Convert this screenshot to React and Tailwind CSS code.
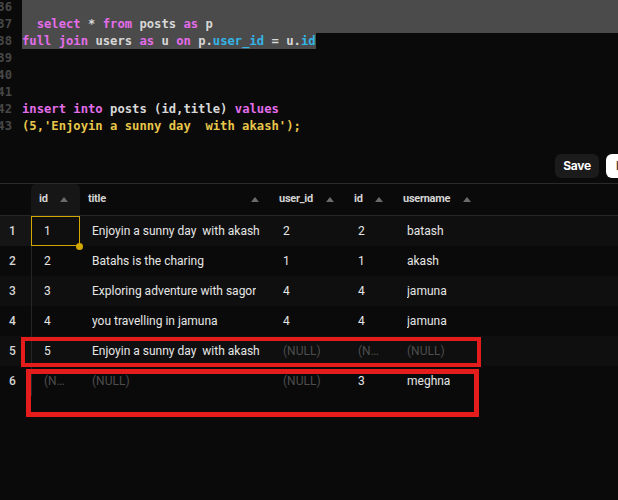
import React from "react";

const K = "text-[#e36de9]"; // keyword
const I = "text-[#d8d8d8]"; // identifier
const C = "text-[#33b5e8]"; // column
const S = "text-[#e8c64a]"; // string

const lines = [
  { n: 36, sel: "full", parts: [] },
  {
    n: 37,
    sel: "full",
    parts: [
      ["  ", I],
      ["select", K],
      [" * ", I],
      ["from", K],
      [" posts ", I],
      ["as", K],
      [" p", I],
    ],
  },
  {
    n: 38,
    sel: "part",
    parts: [
      ["full join", K],
      [" users ", I],
      ["as", K],
      [" u ", I],
      ["on", K],
      [" p.", I],
      ["user_id", C],
      [" = u.", I],
      ["id", C],
    ],
  },
  { n: 39, parts: [] },
  { n: 40, parts: [] },
  { n: 41, parts: [] },
  {
    n: 42,
    parts: [
      ["insert into", K],
      [" posts (id,title) ", I],
      ["values", K],
    ],
  },
  { n: 43, parts: [["(5,'Enjoyin a sunny day  with akash');", S]] },
];

const cols = ["id", "title", "user_id", "id", "username"];

const NULL = "(NULL)";
const rows = [
  ["1", "Enjoyin a sunny day  with akash", "2", "2", "batash"],
  ["2", "Batahs is the charing", "1", "1", "akash"],
  ["3", "Exploring adventure with sagor", "4", "4", "jamuna"],
  ["4", "you travelling in jamuna", "4", "4", "jamuna"],
  ["5", "Enjoyin a sunny day  with akash", NULL, NULL, NULL],
  [NULL, NULL, NULL, "3", "meghna"],
];

const grid = "grid grid-cols-[31px_49px_191px_75px_49px_88px_1fr]";

function Tri() {
  return (
    <svg width="8" height="5" viewBox="0 0 8 5" className="shrink-0">
      <path d="M0 5 L4 0 L8 5 Z" fill="#6b6b6b" />
    </svg>
  );
}

export default function App() {
  return (
    <div className="w-[618px] h-[500px] bg-[#0a0a0a] overflow-hidden relative">
      {/* sql editor */}
      <div className="-mt-[1px] font-['DejaVu_Sans_Mono',monospace] text-[12.2px] font-bold">
        {lines.map((l) => (
          <div key={l.n} className="flex h-[17px] leading-[17px]">
            <div className="w-[22px] shrink-0 flex justify-end pr-[10px] text-[#474747] whitespace-nowrap">
              {l.n}
            </div>
            {l.sel === "full" ? (
              <div className="flex-1 bg-[#4b4b4b] whitespace-pre">
                {l.parts.map(([t, c], i) => (
                  <span key={i} className={c}>
                    {t}
                  </span>
                ))}
              </div>
            ) : (
              <div className="flex-1 whitespace-pre">
                <span className={l.sel === "part" ? "bg-[#4b4b4b] inline-block h-[16px]" : ""}>
                  {l.parts.map(([t, c], i) => (
                    <span key={i} className={c}>
                      {t}
                    </span>
                  ))}
                </span>
              </div>
            )}
          </div>
        ))}
      </div>

      {/* toolbar */}
      <div className="mt-[19px] h-[24px] mb-[5px] flex justify-end gap-[7px] -mr-[40px] font-['Inter',sans-serif] text-[12px] font-bold">
        <button className="w-[44px] h-[24px] rounded-[6px] bg-[#1b1b1b] text-white tracking-tight">
          Save
        </button>
        <button className="w-[52px] h-[24px] rounded-[6px] bg-white text-[#444] text-left pl-[10px]">
          Run
        </button>
      </div>

      {/* results grid */}
      <div className="border-t border-[#2a2a2a] font-['Roboto',sans-serif] text-[12px]">
        <div className={`${grid} h-[32px] border-b border-[#262626]`}>
          <div />
          {cols.map((c, i) => (
            <div
              key={i}
              className={`flex items-center justify-between pl-[8px] pr-[12px] font-bold text-[11px] tracking-tight text-[#d4d4d4] ${
                i === 0 ? "bg-[#161616] rounded-t-[5px]" : ""
              }`}
            >
              <span>{c}</span>
              <Tri />
            </div>
          ))}
          <div />
        </div>

        {rows.map((r, ri) => (
          <div
            key={ri}
            className={`${grid} h-[30px] ${ri % 2 === 0 ? "bg-[#0f0f0f]" : "bg-[#0a0a0a]"}`}
          >
            <div
              className={`flex items-center pl-[9px] font-medium text-[#d6d6d6] ${
                ri === 0 ? "bg-[#151515]" : ""
              }`}
            >
              {ri + 1}
            </div>
            {r.map((v, ci) => (
              <div
                key={ci}
                className={`relative flex items-center min-w-0 pl-[12px] ${
                  ci === 0 || ci === 3 ? "pr-[12px]" : "pr-[2px]"
                } ${ci === 0 ? "border-l border-[#262626]" : ""}`}
              >
                <span
                  className={`truncate whitespace-pre ${
                    v === NULL ? "text-[#4d4d4d]" : "text-[#e6e6e6]"
                  }`}
                >
                  {v}
                </span>
                {ri === 0 && ci === 0 && (
                  <>
                    <div className="absolute -left-[1px] inset-y-0 right-0 border border-[#d2a700]" />
                    <div className="absolute -right-[3px] -bottom-[4px] w-[7px] h-[7px] rounded-full bg-[#d2a700]" />
                  </>
                )}
              </div>
            ))}
            <div />
          </div>
        ))}
      </div>

      {/* annotation boxes */}
      <div className="absolute left-[21px] top-[337px] w-[460px] h-[30px] border-[4px] border-[#e41c1c]" />
      <div className="absolute left-[26px] top-[369px] w-[453px] h-[48px] border-[5px] border-[#e41c1c]" />
    </div>
  );
}
